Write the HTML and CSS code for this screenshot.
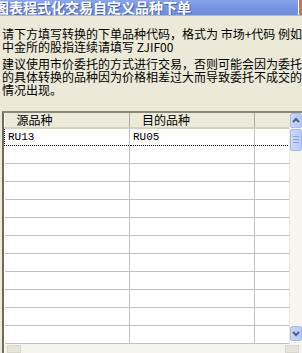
FILE: index.html
```html
<!DOCTYPE html>
<html lang="zh-CN">
<head>
    <meta charset="UTF-8">
    <title>图表程式化交易自定义品种下单</title>
    <link rel="stylesheet" href="styles.css">
</head>
<body>
    <div class="win">
        <div class="titlebar">
            <span class="title">图表程式化交易自定义品种下单</span>
            <span class="close"></span>
        </div>

        <div class="content">
            <p class="hint">请下方填写转换的下单品种代码，格式为 市场+代码 例如<br>中金所的股指连续请填写 ZJIF00</p>
            <p class="hint">建议使用市价委托的方式进行交易，否则可能会因为委托<br>的具体转换的品种因为价格相差过大而导致委托不成交的<br>情况出现。</p>

            <div class="grid-box">
                <div class="grid">
                    <table>
                        <thead>
                            <tr><th class="c1">源品种</th><th class="c2">目的品种</th><th class="c3"></th></tr>
                        </thead>
                        <tbody>
                            <tr class="focus"><td>RU13</td><td>RU05</td><td></td></tr>
                            <tr><td></td><td></td><td></td></tr>
                            <tr><td></td><td></td><td></td></tr>
                            <tr><td></td><td></td><td></td></tr>
                            <tr><td></td><td></td><td></td></tr>
                            <tr><td></td><td></td><td></td></tr>
                            <tr><td></td><td></td><td></td></tr>
                            <tr><td></td><td></td><td></td></tr>
                            <tr><td></td><td></td><td></td></tr>
                            <tr><td></td><td></td><td></td></tr>
                            <tr><td></td><td></td><td></td></tr>
                            <tr><td></td><td></td><td></td></tr>
                        </tbody>
                    </table>
                </div>
                <div class="vscroll">
                    <div class="sbtn up">
                        <svg width="8" height="6" viewBox="0 0 8 6"><path d="M1 5 L4 2 L7 5" fill="none" stroke="#4d6185" stroke-width="2"/></svg>
                    </div>
                    <div class="thumb"><i></i><i></i><i></i></div>
                    <div class="track"></div>
                    <div class="sbtn down">
                        <svg width="8" height="6" viewBox="0 0 8 6"><path d="M1 1 L4 4 L7 1" fill="none" stroke="#4d6185" stroke-width="2"/></svg>
                    </div>
                </div>
            </div>

            <div class="hscroll">
                <div class="hbtn"></div>
                <div class="htrack"></div>
                <div class="hbtn"></div>
            </div>
        </div>
    </div>
</body>
</html>
```

FILE: styles.css
```css
* {
    margin: 0;
    padding: 0;
    box-sizing: border-box;
}
body {
    font-family: "Noto Sans CJK SC", "DejaVu Sans", sans-serif;
    background-color: #ece9d8;
    overflow: hidden;
}
.win {
    width: 302px;
    height: 353px;
    display: flex;
    flex-direction: column;
    background-color: #ece9d8;
}
.titlebar {
    height: 24px;
    display: flex;
    justify-content: space-between;
    align-items: center;
    background: linear-gradient(to bottom, #8aa6ea 0%, #7896e2 40%, #6f8edc 100%);
    border-bottom: 1px solid #a9b8dd;
    overflow: hidden;
}
.title {
    margin-left: -5px;
    color: #fff;
    font-size: 14px;
    font-weight: bold;
    white-space: nowrap;
    text-shadow: 1px 1px 0 #4a63a8;
}
.close {
    width: 12px;
    height: 20px;
    margin-right: -8px;
    border: 1px solid #fff;
    border-radius: 3px;
    background-color: #c8706a;
}
.content {
    flex: 1;
    display: flex;
    flex-direction: column;
    padding: 11px 0 0 2px;
}
.hint {
    font-size: 12px;
    line-height: 13px;
    color: #000;
    white-space: nowrap;
    overflow: hidden;
    margin-bottom: 4px;
}
.grid-box {
    margin-top: 11px;
    flex: 1;
    display: flex;
    border-left: 2px solid #6f6d63;
    border-top: 2px solid #8b897e;
    overflow: hidden;
}
.grid {
    width: 288px;
    background-color: #fff;
    overflow: hidden;
}
table {
    border-collapse: collapse;
    table-layout: fixed;
    width: 288px;
}
th {
    height: 15px;
    background-color: #ebeadb;
    border-right: 1px solid #aca899;
    border-bottom: 2px solid #d6d2c2;
    font-size: 12px;
    font-weight: normal;
    line-height: 13px;
    text-align: left;
    padding-left: 12px;
    color: #000;
}
.c1 { width: 125px; }
.c2 { width: 125px; }
.c3 { width: 38px; }
td {
    height: 18px;
    border-right: 1px solid #c0c0c0;
    border-bottom: 1px solid #c0c0c0;
    font-family: "Liberation Mono", monospace;
    font-size: 11px;
    line-height: 16px;
    padding-left: 3px;
    color: #000;
}
.focus td {
    border-top: 1px dotted #000;
    border-bottom: 1px dotted #000;
}
.focus td:first-child {
    border-left: 1px dotted #000;
}
.focus td:last-child {
    border-right: 1px dotted #000;
}
.vscroll {
    width: 12px;
    margin-left: 1px;
    display: flex;
    flex-direction: column;
    background-color: #f6f5ee;
}
.sbtn {
    height: 15px;
    display: flex;
    align-items: center;
    justify-content: center;
    background: linear-gradient(to right, #c7d6fb, #b6c9f7);
    border: 1px solid #a9bde9;
    border-radius: 2px;
}
.thumb {
    height: 22px;
    margin-top: 1px;
    display: flex;
    flex-direction: column;
    justify-content: center;
    gap: 2px;
    padding: 0 2px;
    background: linear-gradient(to right, #c9d8fc, #b9cbf7);
    border: 1px solid #a6bae8;
    border-radius: 2px;
}
.thumb i {
    display: block;
    height: 1px;
    background-color: #8ca3d9;
}
.track {
    flex: 1;
}
.down {
    margin-bottom: 3px;
}
.hscroll {
    height: 9px;
    display: flex;
    background-color: #f4f3ec;
    border-left: 2px solid #6f6d63;
}
.hbtn {
    width: 14px;
    margin: 1px 3px 0;
    background-color: #e6e5dc;
    border: 1px solid #d8d7cc;
}
.htrack {
    flex: 1;
}
```
